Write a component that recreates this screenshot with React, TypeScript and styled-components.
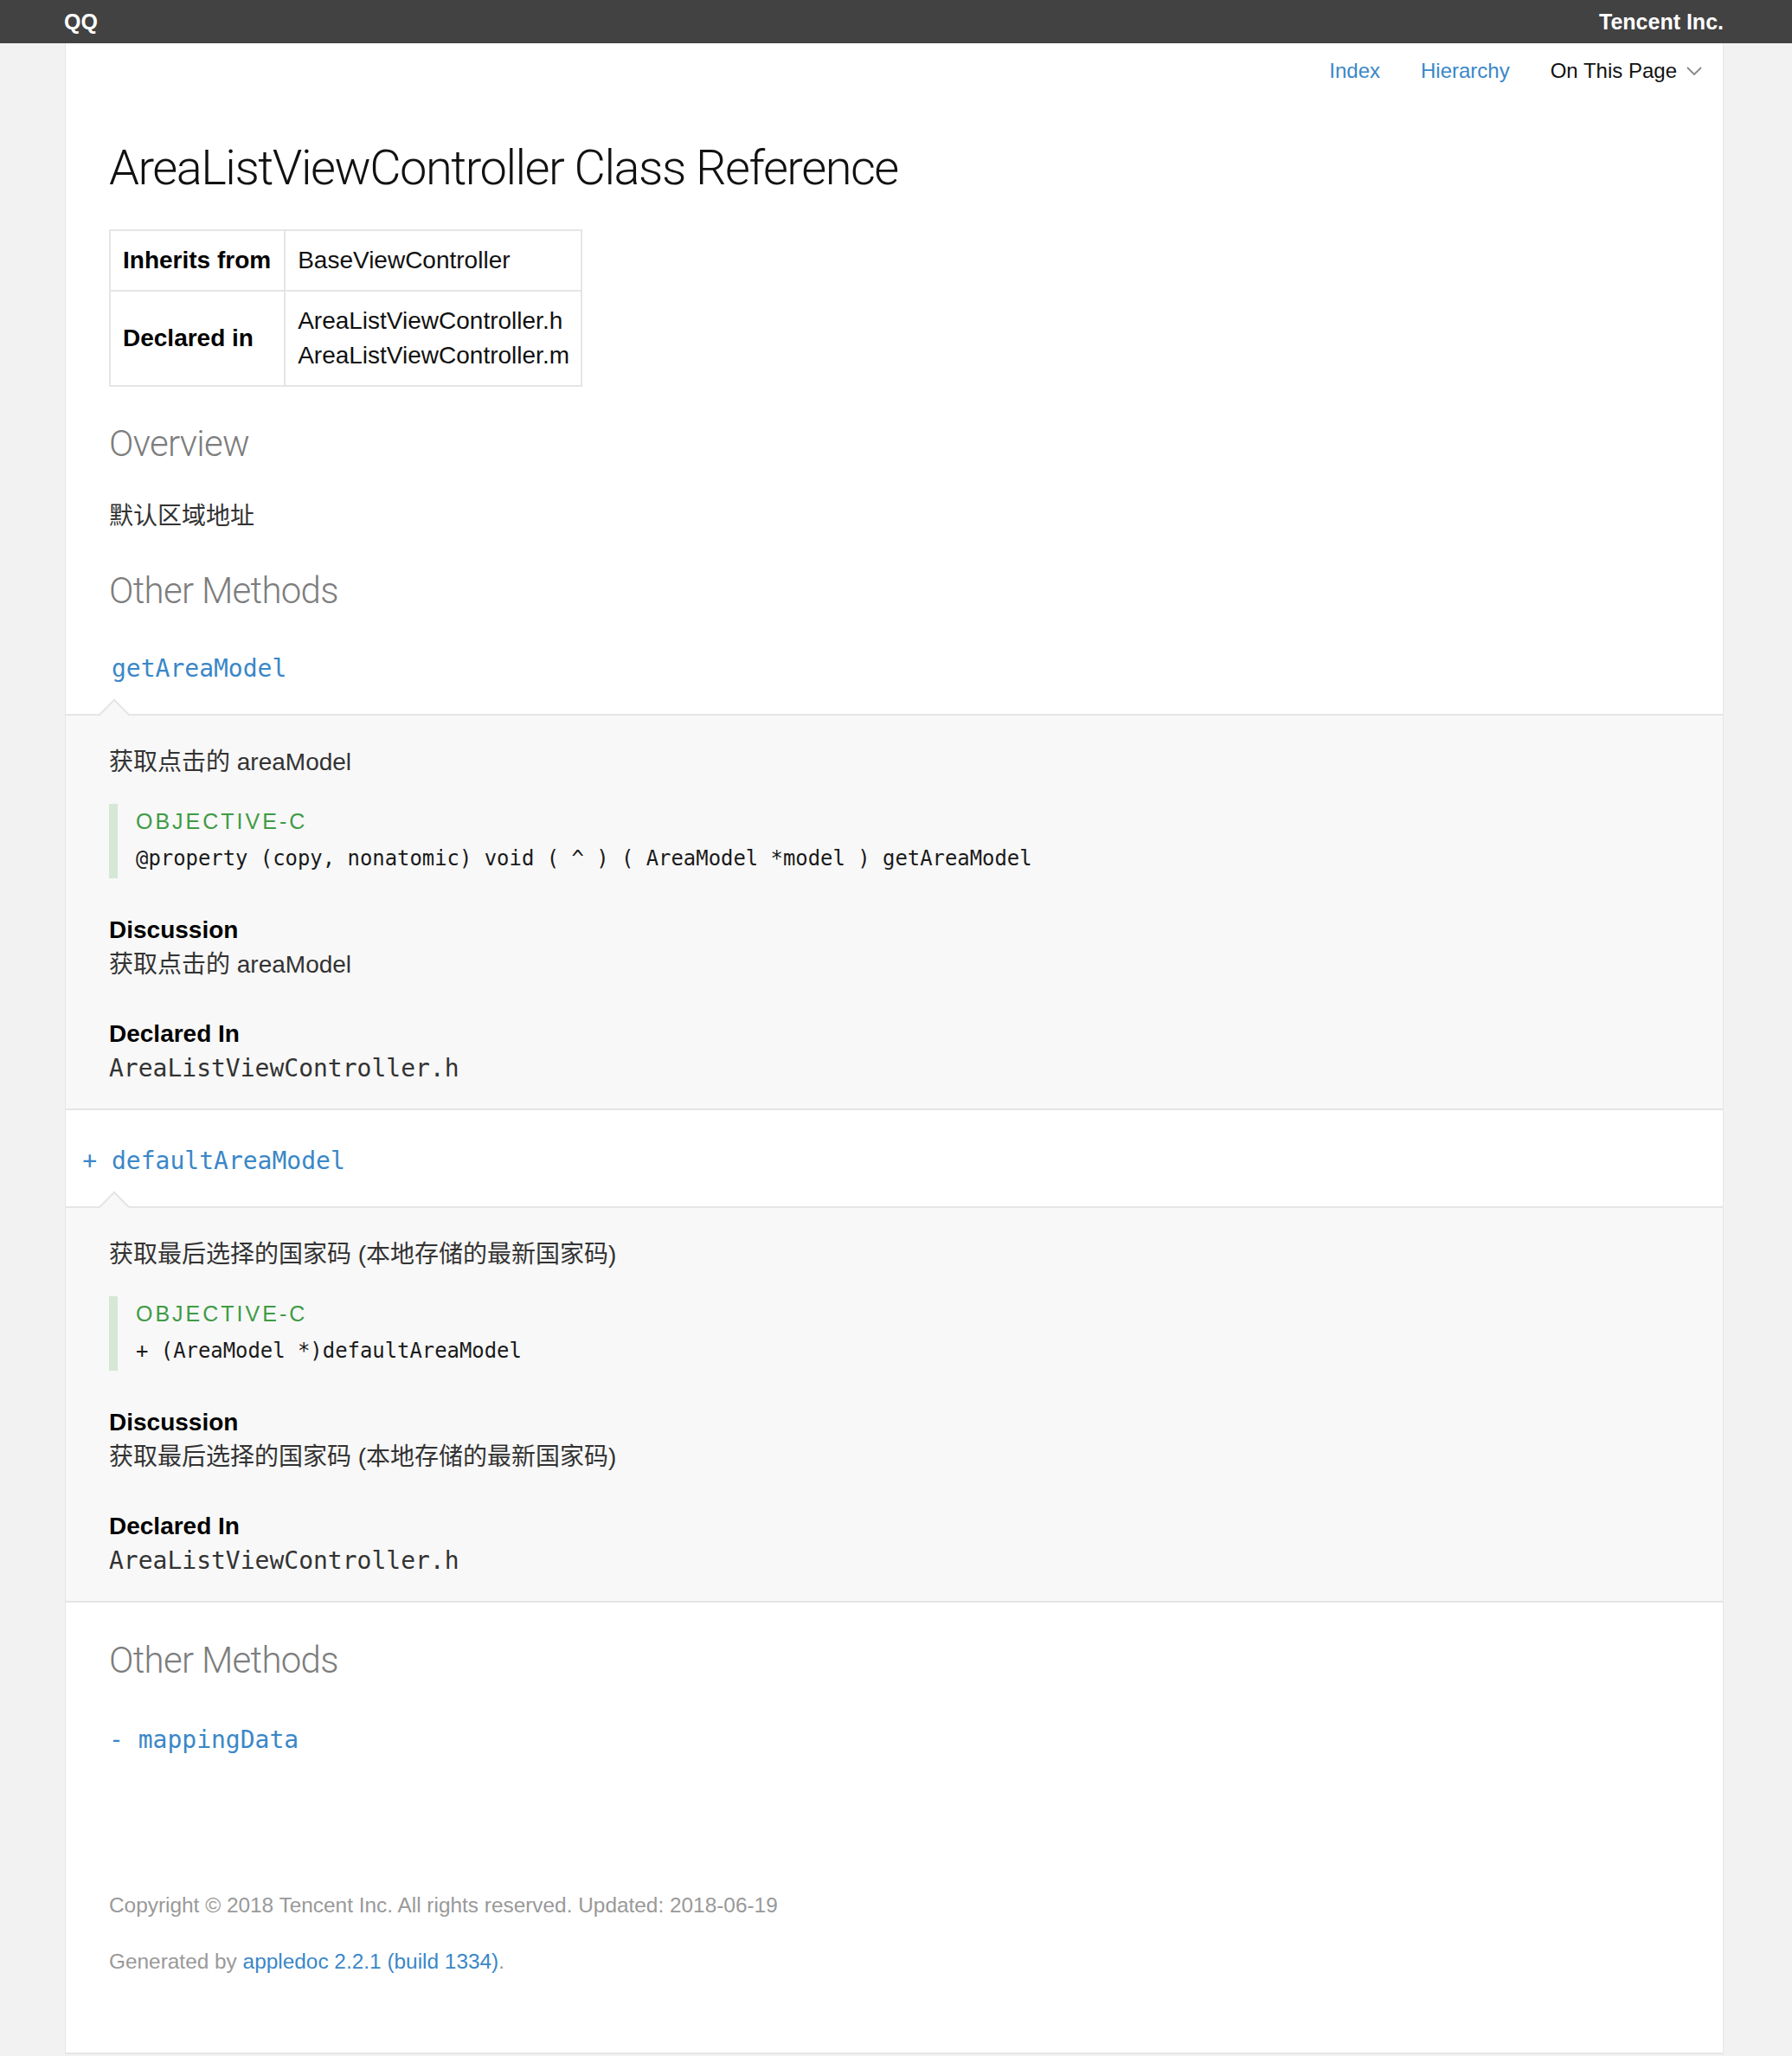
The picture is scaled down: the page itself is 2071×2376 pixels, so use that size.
import React from "react";
import styled, { createGlobalStyle } from "styled-components";

const SANS = `"Liberation Sans", Arial, "Noto Sans CJK SC", sans-serif`;
const LIGHT = `Roboto, "Liberation Sans", "Noto Sans CJK SC", sans-serif`;
const MONO = `"DejaVu Sans Mono", "Liberation Mono", "Noto Sans CJK SC", monospace`;
const BLUE = "#3a87c8";
const RULE = "#e5e5e5";

const GlobalStyle = createGlobalStyle`
  html, body { margin: 0; padding: 0; }
  body {
    background: #f2f2f2;
    font-family: ${SANS};
    color: #333;
  }
  * { box-sizing: border-box; }
`;

const TopBar = styled.header`
  height: 50px;
  background: #424242;
`;

const BarInner = styled.div`
  width: 1918px;
  margin-left: 74px;
  height: 100%;
  display: flex;
  align-items: center;
  justify-content: space-between;
  color: #fff;
  font-weight: bold;
  font-size: 25px;
`;

const Panel = styled.div`
  width: 1917px;
  margin-left: 75px;
  background: #fff;
  border-left: 1px solid #e6e6e6;
  border-right: 1px solid #e6e6e6;
  border-bottom: 2px solid #e6e6e6;
  padding-bottom: 87px;
`;

const Nav = styled.nav`
  display: flex;
  justify-content: flex-end;
  align-items: center;
  gap: 47px;
  padding: 17px 24px 0 0;
  font-size: 24px;
  line-height: 30px;
`;

const NavLink = styled.a`
  color: ${BLUE};
  text-decoration: none;
`;

const NavMenu = styled.span`
  color: #111;
  display: inline-flex;
  align-items: center;
  gap: 11px;
`;

const Main = styled.main`
  padding-left: 50px;
`;

const Title = styled.h1`
  margin: 65px 0 0;
  font-family: ${LIGHT};
  font-weight: 300;
  font-size: 56px;
  line-height: 64px;
  letter-spacing: -1.5px;
  color: #111;
`;

const InfoTable = styled.table`
  margin-top: 39px;
  border-collapse: collapse;
  font-size: 28px;
  line-height: 40px;
  color: #111;
`;

const Th = styled.th`
  border: 2px solid ${RULE};
  padding: 14px 15px 14px 14px;
  text-align: left;
  font-weight: bold;
  color: #000;
`;

const Td = styled.td`
  border: 2px solid ${RULE};
  padding: 14px 13px 14px 14px;
`;

const SectionTitle = styled.h2<{ $top: number }>`
  margin: ${(p) => p.$top}px 0 0;
  font-family: ${LIGHT};
  font-weight: 300;
  font-size: 42px;
  line-height: 50px;
  letter-spacing: -0.7px;
  color: #7d7d7d;
`;

const Para = styled.p<{ $top?: number }>`
  margin: ${(p) => p.$top ?? 0}px 0 0;
  font-size: 28px;
  line-height: 40px;
  color: #333;
`;

const MethodList = styled.div`
  padding-top: 6px;
`;

const MethodHeader = styled.div`
  margin-left: -50px;
  padding: 39px 0 32px 53px;
`;

const MethodName = styled.a`
  display: block;
  font-family: ${MONO};
  font-size: 28px;
  line-height: 40px;
  color: ${BLUE};
  text-decoration: none;
`;

const Prefix = styled.span`
  margin-left: -2ch;
`;

const DetailBox = styled.div`
  position: relative;
  margin-left: -50px;
  padding: 34px 0 26px 50px;
  background: #f8f8f8;
  border-top: 2px solid ${RULE};
  border-bottom: 2px solid ${RULE};

  &::before {
    content: "";
    position: absolute;
    left: 43px;
    top: -14px;
    width: 24px;
    height: 24px;
    background: #f8f8f8;
    border-top: 2px solid ${RULE};
    border-left: 2px solid ${RULE};
    transform: rotate(45deg);
  }
`;

const CodeBlock = styled.div`
  margin-top: 28px;
  border-left: 10px solid #d5e7d5;
  padding: 0 0 3px 21px;
`;

const LangLabel = styled.div`
  font-size: 25px;
  line-height: 40px;
  letter-spacing: 3px;
  color: #3f9b45;
`;

const Code = styled.div`
  padding-top: 3px;
  font-family: ${MONO};
  font-size: 23.9px;
  line-height: 40px;
  color: #1a1a1a;
  white-space: pre;
`;

const Label = styled.div<{ $top: number }>`
  margin-top: ${(p) => p.$top}px;
  font-size: 28px;
  line-height: 40px;
  font-weight: bold;
  color: #000;
`;

const FileName = styled.div`
  font-family: ${MONO};
  font-size: 28px;
  line-height: 40px;
  color: #333;
`;

const TaskItem = styled.a`
  display: block;
  margin-top: 47px;
  font-family: ${MONO};
  font-size: 28px;
  line-height: 40px;
  color: ${BLUE};
  text-decoration: none;
`;

const Footer = styled.footer`
  margin-top: 153px;
  font-size: 24.4px;
  line-height: 36px;
  color: #999;
`;

const FooterLine = styled.p<{ $top?: number }>`
  margin: ${(p) => p.$top ?? 0}px 0 0;
`;

const FooterLink = styled.a`
  color: ${BLUE};
  text-decoration: none;
`;

const Chevron = () => (
  <svg width="18" height="10" viewBox="0 0 18 10" aria-hidden="true">
    <polyline points="1,1 9,9 17,1" fill="none" stroke="#888" strokeWidth="1.8" />
  </svg>
);

type Method = {
  prefix?: string;
  name: string;
  desc: string;
  code: string;
};

const MethodBlock = ({ m }: { m: Method }) => (
  <>
    <MethodHeader>
      <MethodName href="#">
        {m.prefix && <Prefix>{m.prefix} </Prefix>}
        {m.name}
      </MethodName>
    </MethodHeader>
    <DetailBox>
      <Para>{m.desc}</Para>
      <CodeBlock>
        <LangLabel>OBJECTIVE-C</LangLabel>
        <Code>{m.code}</Code>
      </CodeBlock>
      <Label $top={40}>Discussion</Label>
      <Para>{m.desc}</Para>
      <Label $top={40}>Declared In</Label>
      <FileName>AreaListViewController.h</FileName>
    </DetailBox>
  </>
);

const methods: Method[] = [
  {
    name: "getAreaModel",
    desc: "获取点击的 areaModel",
    code: "@property (copy, nonatomic) void ( ^ ) ( AreaModel *model ) getAreaModel",
  },
  {
    prefix: "+",
    name: "defaultAreaModel",
    desc: "获取最后选择的国家码 (本地存储的最新国家码)",
    code: "+ (AreaModel *)defaultAreaModel",
  },
];

export default function App() {
  return (
    <>
      <GlobalStyle />
      <TopBar>
        <BarInner>
          <span>QQ</span>
          <span>Tencent Inc.</span>
        </BarInner>
      </TopBar>
      <Panel>
        <Nav>
          <NavLink href="#">Index</NavLink>
          <NavLink href="#">Hierarchy</NavLink>
          <NavMenu>
            On This Page
            <Chevron />
          </NavMenu>
        </Nav>
        <Main>
          <Title>AreaListViewController Class Reference</Title>
          <InfoTable>
            <tbody>
              <tr>
                <Th>Inherits from</Th>
                <Td>BaseViewController</Td>
              </tr>
              <tr>
                <Th>Declared in</Th>
                <Td>
                  AreaListViewController.h
                  <br />
                  AreaListViewController.m
                </Td>
              </tr>
            </tbody>
          </InfoTable>
          <SectionTitle $top={41}>Overview</SectionTitle>
          <Para $top={39}>默认区域地址</Para>
          <SectionTitle $top={41}>Other Methods</SectionTitle>
          <MethodList>
            {methods.map((m) => (
              <MethodBlock key={m.name} m={m} />
            ))}
          </MethodList>
          <SectionTitle $top={42}>Other Methods</SectionTitle>
          <TaskItem href="#">- mappingData</TaskItem>
          <Footer>
            <FooterLine>Copyright © 2018 Tencent Inc. All rights reserved. Updated: 2018-06-19</FooterLine>
            <FooterLine $top={29}>
              Generated by <FooterLink href="#">appledoc 2.2.1 (build 1334)</FooterLink>.
            </FooterLine>
          </Footer>
        </Main>
      </Panel>
    </>
  );
}
